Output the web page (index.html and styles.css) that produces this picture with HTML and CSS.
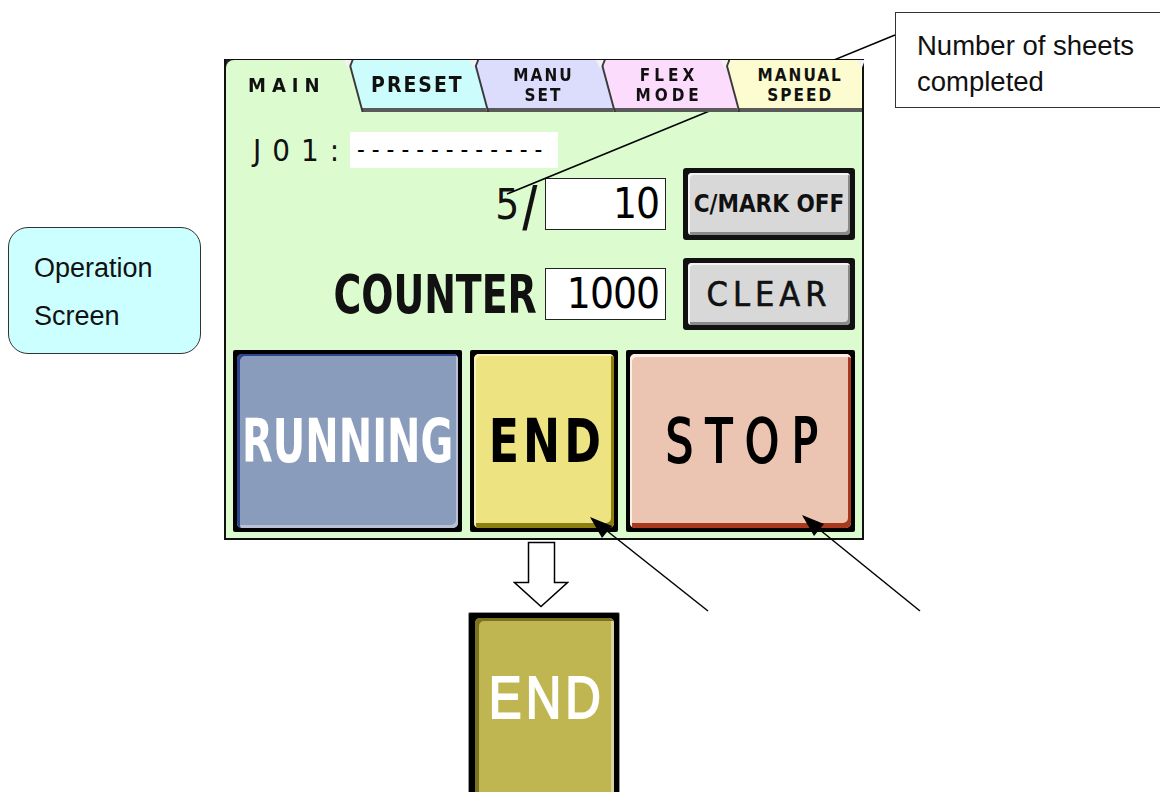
FILE: index.html
```html
<!DOCTYPE html>
<html lang="en">
<head>
    <meta charset="UTF-8">
    <meta name="viewport" content="width=device-width, initial-scale=1.0">
    <title>Operation Screen</title>
    <link rel="stylesheet" href="styles.css">
</head>
<body>
<div class="stage">
    <div class="panel">
        <div class="tabs">
            <div class="tab tab-main"><div class="face"><span>MAIN</span></div></div>
            <div class="tab tab-preset"><div class="face"><span>PRESET</span></div></div>
            <div class="tab tab-manu"><div class="face"><span>MANU<br>SET</span></div></div>
            <div class="tab tab-flex"><div class="face"><span>FLEX<br>MODE</span></div></div>
            <div class="tab tab-speed"><div class="face"><span>MANUAL<br>SPEED</span></div></div>
        </div>
        <div class="body">
            <div class="job">
                <span class="job-label">J01:</span>
                <span class="job-field">-------------</span>
            </div>
            <div class="grid">
                <span class="label count-label">5<span class="slash">/</span></span>
                <span class="box">10</span>
                <div class="key"><div class="key-face key-small">C/MARK OFF</div></div>

                <span class="label counter-label"><span>COUNTER</span></span>
                <span class="box">1000</span>
                <div class="key"><div class="key-face key-clear">CLEAR</div></div>
            </div>
            <div class="actions">
                <div class="big running"><div class="big-face"><span>RUNNING</span></div></div>
                <div class="big end"><div class="big-face"><span>END</span></div></div>
                <div class="big stop"><div class="big-face"><span>STOP</span></div></div>
            </div>
        </div>
    </div>

    <div class="below">
        <svg class="down-arrow" width="56" height="68" viewBox="0 0 56 68">
            <path d="M15.5 1.5 H41.5 V41.5 H54.5 L28 65.5 L1.5 41.5 H15.5 Z" fill="#fff" stroke="#000" stroke-width="1.5"/>
        </svg>
        <div class="big end pressed"><div class="big-face"><span>END</span></div></div>
    </div>

    <div class="note note-screen">Operation<br>Screen</div>
    <div class="note note-sheets">Number of sheets<br>completed</div>

    <svg class="overlay" width="1160" height="792" viewBox="0 0 1160 792">
        <line x1="895" y1="35" x2="507" y2="194" stroke="#000" stroke-width="1.5"/>
        <line x1="708" y1="611" x2="592" y2="519" stroke="#000" stroke-width="1.5"/>
        <line x1="920" y1="611" x2="804" y2="517" stroke="#000" stroke-width="1.5"/>
        <path d="M590 517 L612 526 L602 538 Z" fill="#000"/>
        <path d="M802 515 L824 524 L814 536 Z" fill="#000"/>
    </svg>
</div>
</body>
</html>
```

FILE: styles.css
```css
body {
    margin: 0;
    background: #fff;
    font-family: "Liberation Sans", Arial, sans-serif;
}
.stage {
    position: relative;
    width: 1160px;
    height: 792px;
    overflow: hidden;
    box-sizing: border-box;
    padding: 59px 0 0 224px;
}

/* HMI panel */
.panel {
    width: 640px;
    height: 481px;
    box-sizing: border-box;
    border: 2px solid #111;
    border-top-width: 1px;
    background: #dcfcd0;
    display: flex;
    flex-direction: column;
    font-family: "DejaVu Sans Condensed", "DejaVu Sans", sans-serif;
}
.tabs {
    display: flex;
    height: 52px;
    background: #222;
}
.tab {
    position: relative;
    height: 100%;
    filter: drop-shadow(2px 0 0 #3a3a3a);
}
.tab::after {
    content: "";
    position: absolute;
    top: 0;
    right: 10px;
    width: 8px;
    height: 9px;
    background: #f2f2f2;
    clip-path: polygon(0 0, 100% 0, 55% 100%);
}
.tab-speed::after {
    right: -3px;
}
.tab + .tab {
    margin-left: -14px;
}
.tab-main  { width: 136px; z-index: 5; }
.tab-preset { width: 140px; z-index: 4; }
.tab-manu  { width: 141px; z-index: 3; }
.tab-flex  { width: 139px; z-index: 2; }
.tab-speed { width: 138px; z-index: 1; filter: none; }
.face {
    height: 100%;
    box-sizing: border-box;
    display: flex;
    align-items: center;
    justify-content: center;
    padding-right: 14px;
    clip-path: polygon(0 0, calc(100% - 14px) 0, 100% 100%, 0 100%);
    box-shadow: inset 0 -4px 0 #5a5a5a;
    font-weight: bold;
    font-size: 17px;
    line-height: 20px;
    letter-spacing: 2px;
    text-align: center;
    color: #111;
}
.face span {
    display: inline-block;
    margin-top: -3px;
}
.tab + .tab .face {
    padding-left: 14px;
}
.tab-main .face {
    background: #dcfcd0;
    box-shadow: none;
    border-top-left-radius: 8px;
    letter-spacing: 6px;
    font-size: 20px;
}
.tab-preset .face { background: #ccfcfc; font-size: 21px; letter-spacing: 2px; }
.tab-manu .face { background: #dcdcfc; }
.tab-flex .face { background: #fcdcfc; letter-spacing: 4px; }
.tab-speed .face {
    background: #fcfcd0;
    clip-path: none;
    padding-right: 0;
}

.body {
    flex: 1;
    padding: 20px 7px 6px 7px;
    display: flex;
    flex-direction: column;
}
.job {
    display: flex;
    align-items: center;
    height: 36px;
}
.job-label {
    width: 117px;
    padding-left: 20px;
    box-sizing: border-box;
    font-size: 31px;
    letter-spacing: 11px;
    color: #111;
    white-space: nowrap;
}
.job-field {
    width: 208px;
    height: 36px;
    background: #fff;
    font-size: 24px;
    line-height: 36px;
    padding-left: 7px;
    box-sizing: border-box;
    letter-spacing: 7px;
    overflow: hidden;
    white-space: nowrap;
}

.grid {
    display: grid;
    grid-template-columns: 1fr 121px 172px;
    grid-auto-rows: 72px;
    column-gap: 17px;
    row-gap: 18px;
    align-items: center;
}
.label {
    justify-self: end;
    margin-right: -9px;
    color: #111;
}
.count-label {
    font-size: 42px;
}
.slash {
    display: inline-block;
    margin-left: 4px;
    transform: scale(1.1, 1.3);
    transform-origin: center 40%;
    font-weight: bold;
}
.counter-label {
    font-size: 54px;
    font-weight: bold;
}
.counter-label span {
    display: inline-block;
    transform: scaleX(0.78);
    transform-origin: right center;
}
.box {
    height: 52px;
    box-sizing: border-box;
    border: 1.5px solid #222;
    background: #fff;
    text-align: right;
    padding-right: 6px;
    font-size: 42px;
    line-height: 50px;
    letter-spacing: -1px;
}
.key {
    height: 72px;
    box-sizing: border-box;
    background: #111;
    padding: 5px;
    border-radius: 3px;
}
.key-face {
    height: 100%;
    background: #d8d8d8;
    border-radius: 4px;
    box-shadow: inset 2px 2px 0 #f4f4f4, inset -2px -3px 0 #8a8a8a;
    display: flex;
    align-items: center;
    justify-content: center;
    color: #111;
}
.key-small {
    font-size: 24px;
    font-weight: bold;
    letter-spacing: 0;
}
.key-clear {
    font-size: 34px;
    letter-spacing: 5px;
    -webkit-text-stroke: 0.6px #111;
}

.actions {
    margin-top: 20px;
    display: flex;
    gap: 8px;
    height: 182px;
}
.big {
    box-sizing: border-box;
    background: #000;
    padding: 4px;
    border-radius: 2px;
}
.running, .stop { width: 229px; }
.end { width: 148px; }
.big-face {
    height: 100%;
    box-sizing: border-box;
    border-radius: 5px;
    display: flex;
    align-items: center;
    justify-content: center;
    font-weight: bold;
    font-size: 60px;
}
.big-face span {
    display: inline-block;
    transform: scaleX(0.74);
}
.running .big-face {
    background: #8a9cbb;
    color: #fff;
    box-shadow: inset 3px 2px 0 #2a4790, inset -2px -3px 0 #b9c2d2;
}
.end .big-face {
    background: #ede481;
    color: #000;
    box-shadow: inset 2px 2px 0 #f8f2b8, inset -3px -5px 0 #8c7f10;
}
.end .big-face span {
    letter-spacing: 5px;
    margin-left: 5px;
    transform: scaleX(0.82);
}
.stop .big-face {
    background: #ecc4b2;
    color: #000;
    font-weight: normal;
    box-shadow: inset 2px 3px 0 #fbeee6, inset -3px -5px 0 #a9391c;
}
.stop .big-face span {
    -webkit-text-stroke: 2px #000;
    letter-spacing: 16px;
    margin-left: 16px;
    transform: scaleX(0.8);
}

/* pressed state */
.below {
    width: 152px;
    margin-left: 244px;
    display: flex;
    flex-direction: column;
    align-items: center;
}
.down-arrow {
    display: block;
    margin-top: 1px;
    margin-right: 6px;
}
.end.pressed {
    margin-top: 3px;
    width: 152px;
    height: 200px;
    padding: 5px 5px 5px 6px;
    border: 1px solid #999;
}
.end.pressed .big-face {
    background: #bfb652;
    color: #fff;
    font-weight: normal;
    font-size: 60px;
    padding-bottom: 30px;
    box-shadow: inset 4px 3px 0 #7c7320, inset -3px 0 0 #d9d49b;
}
.end.pressed .big-face span {
    -webkit-text-stroke: 2px #fff;
    letter-spacing: 5px;
    margin-left: 5px;
}

/* annotations */
.note {
    position: absolute;
    box-sizing: border-box;
    color: #111;
}
.note-screen {
    left: 8px;
    top: 227px;
    width: 193px;
    height: 127px;
    border: 1.5px solid #333;
    border-radius: 20px;
    background: #ccffff;
    padding: 16px 0 0 25px;
    line-height: 48px;
    font-size: 27px;
}
.note-sheets {
    left: 895px;
    top: 12px;
    width: 270px;
    height: 96px;
    border: 1.5px solid #333;
    background: #fff;
    padding: 15px 0 0 21px;
    line-height: 36px;
    font-size: 27.5px;
}
.overlay {
    position: absolute;
    left: 0;
    top: 0;
    pointer-events: none;
}
```
